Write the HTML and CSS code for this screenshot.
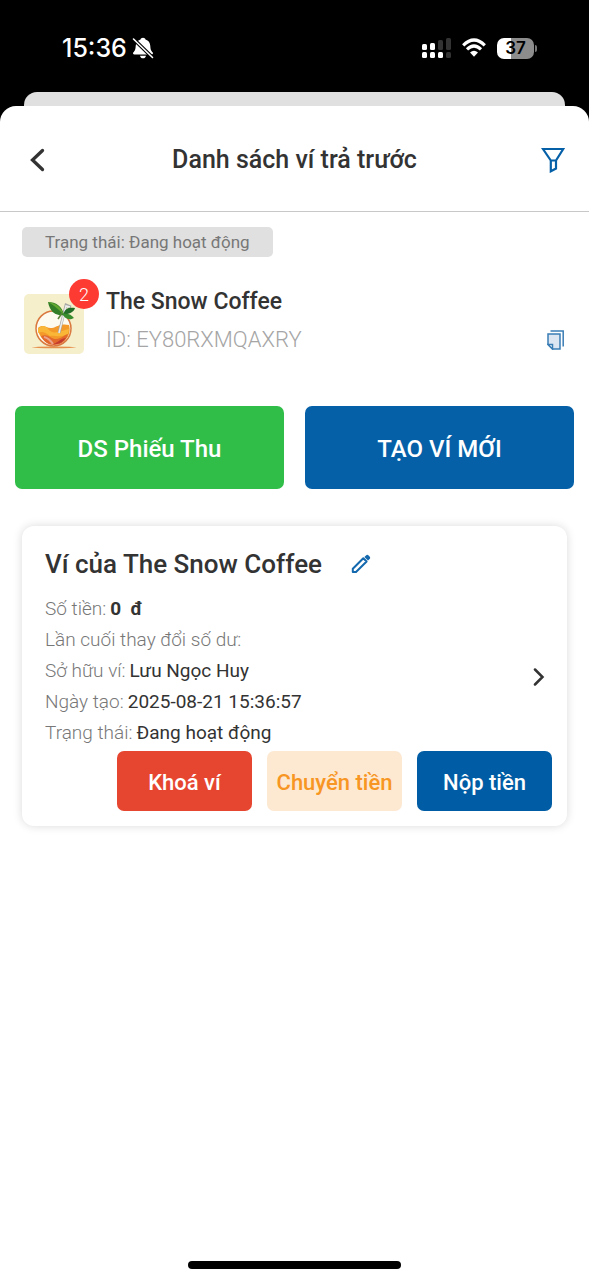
FILE: index.html
```
<!DOCTYPE html>
<html lang="vi">
<head>
<meta charset="utf-8">
<meta name="viewport" content="width=device-width, initial-scale=1">
<title>Danh sách ví trả trước</title>
<link rel="stylesheet" href="styles.css">
</head>
<body>
<div class="status-bar">
  <div class="clock">
    <span>15:36</span>
    <svg class="bell" viewBox="0 0 22 22" aria-hidden="true">
      <path fill="#fff" d="M11 .8c1.400 0 2.300.8 2.500 1.700 3 .9 4.600 3.300 4.800 6.400.2 4 1.100 5 2.300 6.400.8 1 .3 2.200-1 2.200H2.400c-1.300 0-1.800-1.200-1-2.200C2.600 13.900 3.500 12.900 3.700 8.900c.2-3.100 1.800-5.500 4.800-6.400C8.700 1.600 9.600.8 11 .8zM8 18.700h6c-.3 1.600-1.500 2.600-3 2.600s-2.700-1-3-2.600z"/>
      <path stroke="#000" stroke-width="3.800" d="M1.500 2l18.500 18"/>
      <path stroke="#fff" stroke-width="1.600" stroke-linecap="round" d="M1.500 2l19 18.500"/>
    </svg>
  </div>
  <div class="indicators">
    <svg class="signal" viewBox="0 0 29 22" aria-hidden="true">
      <g fill="#fff">
        <rect x="0" y="7" width="5" height="6" rx="1.500"/><rect x="8" y="6" width="5" height="7" rx="1.500"/>
        <rect x="0" y="15" width="5" height="6" rx="1.500"/><rect x="8" y="15" width="5" height="6" rx="1.500"/><rect x="16" y="15" width="5" height="6" rx="1.500"/>
      </g>
      <g fill="#333">
        <rect x="16" y="3" width="5" height="10" rx="1.500"/><rect x="24" y="1" width="5" height="12" rx="1.500"/><rect x="24" y="15" width="5" height="6" rx="1.500"/>
      </g>
    </svg>
    <svg class="wifi" viewBox="0 0 24 20" aria-hidden="true">
      <g fill="none" stroke="#fff" stroke-width="3.200">
        <path d="M1.200 7.300Q12-3.200 22.800 7.300"/>
        <path d="M5 11.300Q12 4.700 19 11.300"/>
      </g>
      <path fill="#fff" d="M8 14.400Q12 11 16 14.400L12 18.800z"/>
    </svg>
    <div class="battery"><span class="battery-level">37</span></div>
  </div>
</div>
<div class="sheet-behind"></div>
<main class="sheet">
  <header class="header">
    <button class="icon-button" type="button" aria-label="Quay lại">
      <svg class="icon-back" viewBox="-6 0 28 24" fill="none" stroke="#333" stroke-width="3.300" stroke-linecap="round" stroke-linejoin="miter"><path d="M12.500 2.500L2.500 12l10 9.500"/></svg>
    </button>
    <h1 class="title">Danh sách ví trả trước</h1>
    <button class="icon-button icon-button-end" type="button" aria-label="Bộ lọc">
      <svg class="icon-filter" viewBox="0 0 24 26" fill="none" stroke="#0560a8" stroke-width="2.200"><path d="M2 2h20.200L15 13.500v8L9.800 24.300V13.500zM9.800 13.500H15"/></svg>
    </button>
  </header>

  <div class="content">
    <span class="chip">Trạng thái: Đang hoạt động</span>

    <section class="shop">
      <div class="shop-logo">
        <svg class="logo" viewBox="0 0 60 60" aria-hidden="true">
          <rect width="60" height="60" rx="5" fill="#f5efcb"/>
          <ellipse cx="30" cy="53.300" rx="22" ry=".9" fill="#e58f4a"/>
          <circle cx="29.500" cy="34.500" r="17.500" fill="#fdfaf0" stroke="#d9793f" stroke-width="1.500"/>
          <path fill="#f39a2b" d="M14 34c5-5 9 1 14 0s8-5 17-3c3 10-4 19-15 19-8 0-16-7-16-16z"/>
          <path fill="#f9b637" d="M14 35c4-5 8-3 11 1 4 5 12 1 20-1l-1 5c-8 4-14 1-18 2-5-4-8-5-12-3z"/>
          <path fill="#e2682c" d="M17 42c7-3 10 3 15 3s8-4 12-5c-2 8-8 11-14 11-6 0-10-3-13-9z"/>
          <path fill="#c23a2e" d="M28 50c5 0 7-5 14-6-4 5-8 7-14 6z"/>
          <path d="M20 43c4 1 7 4 9 7" stroke="#eaa28a" stroke-width="2" fill="none"/>
          <path d="M47 13l-5-2-7 28" fill="none" stroke="#a7a8a5" stroke-width="2.800"/>
          <path d="M46 13l-4-1-7 27" fill="none" stroke="#ededed" stroke-width="1.500"/>
          <path fill="#327d27" d="M24 8c8 0 14 4 16 13-9 1-14-3-16-13z"/>
          <path fill="#62a831" d="M24 8c6 3 10 7 16 13-3-9-9-12-16-13z"/>
          <path fill="#236d28" d="M39 21c2-7 6-8 12-7-1 4-6 6-12 7z"/>
          <path fill="#398c2d" d="M38 20c6-1 9 0 12 4-6 3-9 0-12-4z"/>
          <path d="M38 19l-4 6" stroke="#588237" stroke-width="1.500"/>
        </svg>
        <span class="badge">2</span>
      </div>
      <div class="shop-info">
        <h2 class="shop-name">The Snow Coffee</h2>
        <div class="shop-id">
          <span>ID: EY80RXMQAXRY</span>
          <button class="icon-button" type="button" aria-label="Sao chép ID">
            <svg class="icon-copy" viewBox="0 0 18 20" fill="none" stroke="#3a7db5" stroke-width="1.500"><path d="M3.500 1h12.700v15.500"/><path fill="#dce6f3" d="M1 4h12v15H5.500L1 14.500z"/><path fill="#fff" d="M1 14.500h4.500V19z"/></svg>
          </button>
        </div>
      </div>
    </section>
  </div>

  <div class="actions">
    <button class="action action-green" type="button">DS Phiếu Thu</button>
    <button class="action action-blue" type="button">TẠO VÍ MỚI</button>
  </div>

  <article class="card">
    <div class="card-head">
      <h2 class="card-title">Ví của The Snow Coffee</h2>
      <button class="icon-button" type="button" aria-label="Sửa tên ví">
        <svg class="icon-edit" viewBox="0 0 20 20"><path fill="none" stroke="#1468ad" stroke-width="2" stroke-linejoin="round" d="M12.300 4.200l3.300 3.300L5 18H1.800v-3.200z"/><path fill="#1468ad" d="M13.400 3l1.600-1.600c.8-.8 1.800-.8 2.600 0l1 1c.8.8.8 1.800 0 2.600L17 6.600z"/></svg>
      </button>
    </div>
    <div class="card-body">
      <dl class="details">
        <div class="row"><dt>Số tiền:</dt><dd class="amount">0 &nbsp;đ</dd></div>
        <div class="row"><dt>Lần cuối thay đổi số dư:</dt><dd></dd></div>
        <div class="row"><dt>Sở hữu ví:</dt><dd>Lưu Ngọc Huy</dd></div>
        <div class="row"><dt>Ngày tạo:</dt><dd>2025-08-21 15:36:57</dd></div>
        <div class="row"><dt>Trạng thái:</dt><dd>Đang hoạt động</dd></div>
      </dl>
      <button class="icon-button open-wallet" type="button" aria-label="Xem chi tiết ví">
        <svg class="icon-next" viewBox="0 0 12 18" fill="none" stroke="#333" stroke-width="2.500" stroke-linecap="round"><path d="M2 1.500L9.500 9 2 16.500"/></svg>
      </button>
    </div>
    <div class="card-actions">
      <button class="small-action small-red" type="button">Khoá ví</button>
      <button class="small-action small-orange" type="button">Chuyển tiền</button>
      <button class="small-action small-blue" type="button">Nộp tiền</button>
    </div>
  </article>
  <div class="home-indicator"></div>
</main>
</body>
</html>
```
FILE: styles.css
```
* {
  box-sizing: border-box;
}

body {
  margin: 0;
  min-height: 100vh;
  display: flex;
  flex-direction: column;
  background: #000;
  color: #333;
  font-family: Roboto, "Noto Sans", sans-serif;
  font-size: 19px;
}

h1, h2, dl, dd {
  margin: 0;
}

button {
  font-family: inherit;
  border: 0;
  cursor: pointer;
}

svg {
  display: block;
}

.status-bar {
  display: flex;
  justify-content: space-between;
  align-items: center;
  height: 92px;
  padding: 4px 52px 0 62px;
  color: #fff;
}

.clock {
  display: flex;
  align-items: center;
  gap: 5px;
  font-family: Inter, sans-serif;
  font-size: 25px;
  font-weight: 500;
}

.bell {
  width: 22px;
  height: 22px;
}

.indicators {
  display: flex;
  align-items: center;
  gap: 11px;
}

.signal {
  width: 29px;
  height: 22px;
}

.wifi {
  width: 24px;
  height: 20px;
}

.battery {
  position: relative;
  width: 37px;
  height: 21px;
  border-radius: 7px;
  background: linear-gradient(to right, #fff 37%, #8c8c8c 37%);
  margin-right: 3px;
}

.battery::after {
  content: "";
  position: absolute;
  right: -3px;
  top: 7px;
  width: 2px;
  height: 7px;
  border-radius: 0 2px 2px 0;
  background: #777;
}

.battery-level {
  display: block;
  line-height: 21px;
  text-align: center;
  color: #000;
  font-family: Inter, sans-serif;
  font-size: 17px;
  font-weight: 600;
}

.sheet-behind {
  height: 34px;
  margin: 0 24px -20px;
  border-radius: 13px 13px 0 0;
  background: #e0e0e0;
}

.sheet {
  flex: 1;
  display: flex;
  flex-direction: column;
  border-radius: 16px 16px 0 0;
  background: #fff;
}

.header {
  display: grid;
  grid-template-columns: 1fr auto 1fr;
  align-items: center;
  height: 106px;
  padding: 2px 24px 0;
  border-bottom: 1px solid #c8c8c8;
}

.icon-button {
  display: flex;
  padding: 0;
  background: none;
}

.icon-button-end {
  justify-self: end;
}

.icon-back {
  width: 28px;
  height: 24px;
}

.icon-filter {
  width: 24px;
  height: 26px;
}

.title {
  font-size: 25px;
  font-weight: 500;
}

.content {
  padding: 15px 22px 0;
}

.chip {
  display: inline-block;
  padding: 0 23px;
  border-radius: 5px;
  background: #e0e0e0;
  color: #777;
  font-size: 17px;
  line-height: 30px;
}

.shop {
  display: flex;
  gap: 22px;
  padding: 26px 2px 0;
}

.shop-logo {
  position: relative;
  width: 60px;
  padding-top: 11px;
}

.logo {
  width: 60px;
  height: 60px;
}

.badge {
  position: absolute;
  top: -4px;
  right: -15px;
  width: 30px;
  height: 30px;
  border-radius: 50%;
  background: #fe3b33;
  color: #fff;
  font-size: 18px;
  font-weight: 300;
  line-height: 32px;
  text-align: center;
}

.shop-info {
  flex: 1;
}

.shop-name {
  font-size: 23px;
  font-weight: 500;
  line-height: 38px;
}

.shop-id {
  display: flex;
  justify-content: space-between;
  align-items: center;
  color: #a5a5a5;
  font-size: 22px;
  font-weight: 300;
  line-height: 37px;
}

.icon-copy {
  width: 18px;
  height: 20px;
}

.actions {
  display: grid;
  grid-template-columns: 1fr 1fr;
  gap: 21px;
  padding: 48px 15px 0;
}

.action {
  height: 83px;
  padding: 2px 0 0;
  border-radius: 7px;
  color: #fff;
  font-size: 24px;
  font-weight: 500;
}

.action-green {
  background: #30bd48;
}

.action-blue {
  background: #0560a8;
}

.card {
  margin: 37px 22px 0;
  padding: 19px 15px 15px 23px;
  border-radius: 12px;
  background: #fff;
  box-shadow: 0 0 10px rgba(0, 0, 0, 0.15);
}

.card-head {
  display: flex;
  align-items: center;
  gap: 29px;
}

.card-title {
  font-size: 26px;
  font-weight: 500;
  line-height: 38px;
}

.icon-edit {
  width: 20px;
  height: 20px;
}

.card-body {
  display: flex;
  justify-content: space-between;
  align-items: center;
  padding: 10px 7px 3px 0;
}

.row {
  display: flex;
  gap: 4px;
  line-height: 31px;
}

.row dt {
  color: #777;
  font-weight: 300;
}

.row .amount {
  font-weight: 700;
}

.open-wallet {
  padding-top: 12px;
}

.icon-next {
  width: 12px;
  height: 18px;
}

.card-actions {
  display: grid;
  grid-template-columns: repeat(3, 135px);
  justify-content: end;
  gap: 15px;
}

.small-action {
  height: 60px;
  padding: 2px 0 0;
  border-radius: 7px;
  color: #fff;
  font-size: 22px;
  font-weight: 500;
  white-space: nowrap;
}

.small-red {
  background: #e64630;
}

.small-orange {
  background: #fde8d2;
  color: #f79622;
}

.small-blue {
  background: #005da5;
}

.home-indicator {
  width: 36%;
  height: 8px;
  margin: auto auto 11px;
  border-radius: 4px;
  background: #000;
}
```
